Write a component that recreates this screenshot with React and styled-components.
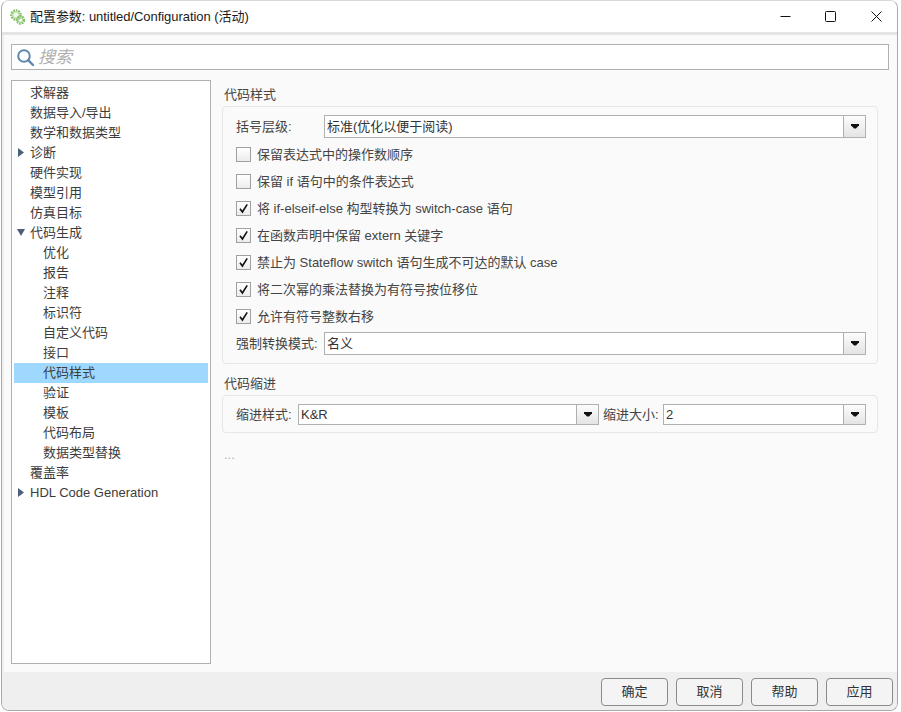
import React from 'react';
import styled, { createGlobalStyle } from 'styled-components';

const GlobalStyle = createGlobalStyle`
  html, body {
    margin: 0;
    padding: 0;
    background: #ffffff;
  }
  body {
    font-family: "Liberation Sans", "Noto Sans CJK SC", sans-serif;
    font-size: 13px;
    line-height: 14px;
    color: #333333;
  }
`;

const Window = styled.div`
  box-sizing: border-box;
  width: 897px;
  height: 711px;
  margin-left: 1px;
  border: 1px solid #a8a8a8;
  border-top-color: #d8d8d8;
  border-radius: 8px;
  overflow: hidden;
  display: flex;
  flex-direction: column;
  background: #fafafa;
`;

const TitleBar = styled.div`
  flex: none;
  height: 31px;
  display: flex;
  align-items: center;
  background: #ffffff;
  border-bottom: 3px solid #e4e4e4;
  padding-left: 8px;
`;

const TitleText = styled.div`
  flex: 1;
  margin-left: 5px;
  font-size: 13px;
  letter-spacing: -0.05px;
  color: #1a1a1a;
  white-space: nowrap;
`;

const WinButton = styled.div`
  box-sizing: border-box;
  width: 45px;
  height: 31px;
  padding-left: ${(p) => (p.$close ? 4 : 2)}px;
  display: flex;
  align-items: center;
  justify-content: center;
`;

const Body = styled.div`
  flex: 1;
  min-height: 0;
  display: flex;
  flex-direction: column;
  border-left: 2px solid #f0f0f0;
  padding: 9px 7px 8px 7px;
`;

const SearchBox = styled.div`
  box-sizing: border-box;
  flex: none;
  width: 878px;
  height: 26px;
  display: flex;
  align-items: center;
  gap: 3px;
  padding-left: 4px;
  background: #ffffff;
  border: 1px solid #b0b0b0;
`;

const SearchHint = styled.span`
  font-size: 17px;
  line-height: 20px;
  padding-top: 2px;
  font-style: italic;
  color: #b0b0b0;
`;

const Main = styled.div`
  flex: 1;
  min-height: 0;
  display: flex;
  gap: 11px;
  margin-top: 10px;
`;

const Tree = styled.div`
  box-sizing: border-box;
  flex: none;
  width: 200px;
  height: 584px;
  padding: 2px;
  background: #ffffff;
  border: 1px solid #b0b0b0;
`;

const TreeRow = styled.div`
  height: 20px;
  display: flex;
  align-items: center;
  padding-left: ${(p) => (p.$child ? 29 : 16)}px;
  background: ${(p) => (p.$selected ? '#9fd8ff' : 'transparent')};
  position: relative;
  white-space: nowrap;
  color: #3c3c3c;
`;

const Arrow = styled.svg`
  position: absolute;
  left: ${(p) => (p.$down ? 3 : 4)}px;
  top: ${(p) => (p.$down ? 6 : 5)}px;
  width: ${(p) => (p.$down ? 8 : 6)}px;
  height: ${(p) => (p.$down ? 7 : 9)}px;
`;

const Content = styled.div`
  flex: none;
  width: 656px;
  display: flex;
  flex-direction: column;
`;

const SectionTitle = styled.div`
  height: 16px;
  line-height: 16px;
  padding-left: 2px;
  color: #444444;
  margin-top: ${(p) => p.$top}px;
  margin-bottom: 3px;
`;

const Panel = styled.div`
  box-sizing: border-box;
  height: ${(p) => p.$height}px;
  border: 1px solid #e6e6e6;
  border-radius: 4px;
  padding: 8px 11px 0 13px;
  display: flex;
  flex-direction: column;
  background: #fafafa;
`;

const Line = styled.div`
  display: flex;
  align-items: center;
  height: ${(p) => p.$height || 23}px;
`;

const Label = styled.label`
  flex: none;
  width: ${(p) => (p.$width ? `${p.$width}px` : 'auto')};
  margin-left: ${(p) => p.$left || 0}px;
  color: #444444;
  white-space: nowrap;
`;

const Combo = styled.div`
  box-sizing: border-box;
  flex: ${(p) => (p.$width ? 'none' : 1)};
  width: ${(p) => (p.$width ? `${p.$width}px` : 'auto')};
  height: ${(p) => p.$height || 23}px;
  display: flex;
  align-items: stretch;
  background: #ffffff;
  border: 1px solid #b0b0b0;
`;

const ComboValue = styled.div`
  flex: 1;
  display: flex;
  align-items: center;
  padding-left: 2px;
  color: #333333;
`;

const ComboButton = styled.div`
  flex: none;
  width: 21px;
  display: flex;
  align-items: center;
  justify-content: center;
  border-left: 1px solid #b0b0b0;
  background: linear-gradient(#fcfcfc, #e4e4e4);
`;

const CheckRows = styled.div`
  display: flex;
  flex-direction: column;
  padding-top: 3px;
  margin-bottom: 2px;
`;

const CheckRow = styled.div`
  height: 27px;
  display: flex;
  align-items: center;
  gap: 6px;
  color: #444444;
  white-space: nowrap;
`;

const CheckBox = styled.div`
  box-sizing: border-box;
  width: 15px;
  height: 15px;
  display: flex;
  align-items: center;
  justify-content: center;
  border: 1px solid #a0a0a0;
  background: linear-gradient(#ffffff, #ececec);
`;

const Dots = styled.div`
  margin-top: 15px;
  padding-left: 2px;
  color: #b0b0b0;
  font-size: 13px;
  line-height: 14px;
`;

const Footer = styled.div`
  flex: none;
  height: 32px;
  display: flex;
  justify-content: flex-end;
  align-items: flex-start;
  gap: 8px;
  padding: 6px 4px 0 0;
  background: #efefef;
`;

const Button = styled.button`
  box-sizing: border-box;
  width: 67px;
  height: 28px;
  padding: 0;
  border: 1px solid #8a8a8a;
  border-radius: 4px;
  background: #f4f4f4;
  font: inherit;
  color: #333333;
`;

const treeItems = [
  { label: '求解器' },
  { label: '数据导入/导出' },
  { label: '数学和数据类型' },
  { label: '诊断', arrow: 'right' },
  { label: '硬件实现' },
  { label: '模型引用' },
  { label: '仿真目标' },
  { label: '代码生成', arrow: 'down' },
  { label: '优化', child: true },
  { label: '报告', child: true },
  { label: '注释', child: true },
  { label: '标识符', child: true },
  { label: '自定义代码', child: true },
  { label: '接口', child: true },
  { label: '代码样式', child: true, selected: true },
  { label: '验证', child: true },
  { label: '模板', child: true },
  { label: '代码布局', child: true },
  { label: '数据类型替换', child: true },
  { label: '覆盖率' },
  { label: 'HDL Code Generation', arrow: 'right' },
];

const checks = [
  { label: '保留表达式中的操作数顺序', checked: false },
  { label: '保留 if 语句中的条件表达式', checked: false },
  { label: '将 if-elseif-else 构型转换为 switch-case 语句', checked: true },
  { label: '在函数声明中保留 extern 关键字', checked: true },
  { label: '禁止为 Stateflow switch 语句生成不可达的默认 case', checked: true },
  { label: '将二次幂的乘法替换为有符号按位移位', checked: true },
  { label: '允许有符号整数右移', checked: true },
];

const Gear = ({ cx, cy, r }) => (
  <>
    <circle cx={cx} cy={cy} r={r} fill="none" stroke="#86c06c" strokeWidth="2.4" strokeDasharray="1.8 0.8" />
    <circle cx={cx} cy={cy} r={r - 1.4} fill="none" stroke="#a9d493" strokeWidth="1" />
    <circle cx={cx} cy={cy} r={r - 2.6} fill="#eef6e8" />
  </>
);

const AppIcon = () => (
  <svg width="15" height="16" viewBox="0 0 15 16">
    <Gear cx={6} cy={6} r={4.6} />
    <Gear cx={10.5} cy={11} r={3.6} />
  </svg>
);

const SearchIcon = () => (
  <svg width="19" height="19" viewBox="0 0 19 19">
    <circle cx="8" cy="8" r="5.8" fill="none" stroke="#5f88ad" strokeWidth="2" />
    <path d="M12.2 12.2 L17 17" stroke="#5f88ad" strokeWidth="2.4" strokeLinecap="round" />
  </svg>
);

const ComboArrow = () => (
  <svg width="8" height="5" viewBox="0 0 8 5">
    <path d="M0 0 H8 V1.2 L5 4.6 H3 L0 1.2 Z" fill="#111111" />
  </svg>
);

const CheckMark = () => (
  <svg width="11" height="11" viewBox="0 0 11 11">
    <path d="M2 5.8 L4.4 9 L9.2 1.4" fill="none" stroke="#111111" strokeWidth="1.6" />
  </svg>
);

const SelectBox = ({ value, width, height }) => (
  <Combo $width={width} $height={height}>
    <ComboValue>{value}</ComboValue>
    <ComboButton>
      <ComboArrow />
    </ComboButton>
  </Combo>
);

const App = () => (
  <>
    <GlobalStyle />
    <Window>
      <TitleBar>
        <AppIcon />
        <TitleText>配置参数: untitled/Configuration (活动)</TitleText>
        <WinButton>
          <svg width="11" height="11" viewBox="0 0 11 11">
            <path d="M0.5 5.5 H10.5" stroke="#111111" strokeWidth="1" />
          </svg>
        </WinButton>
        <WinButton>
          <svg width="11" height="11" viewBox="0 0 11 11">
            <rect x="0.5" y="0.5" width="10" height="10" rx="1" fill="none" stroke="#111111" />
          </svg>
        </WinButton>
        <WinButton $close>
          <svg width="11" height="11" viewBox="0 0 11 11">
            <path d="M0.5 0.5 L10.5 10.5 M10.5 0.5 L0.5 10.5" stroke="#111111" strokeWidth="1" />
          </svg>
        </WinButton>
      </TitleBar>
      <Body>
        <SearchBox>
          <SearchIcon />
          <SearchHint>搜索</SearchHint>
        </SearchBox>
        <Main>
          <Tree>
            {treeItems.map((item) => (
              <TreeRow key={item.label} $child={item.child} $selected={item.selected}>
                {item.arrow === 'right' && (
                  <Arrow viewBox="0 0 6 9">
                    <path d="M0 0 L6 4.5 L0 9 Z" fill="#4a6078" />
                  </Arrow>
                )}
                {item.arrow === 'down' && (
                  <Arrow $down viewBox="0 0 8 7">
                    <path d="M0 0 H8 L4 7 Z" fill="#4a6078" />
                  </Arrow>
                )}
                {item.label}
              </TreeRow>
            ))}
          </Tree>
          <Content>
            <SectionTitle $top={7}>代码样式</SectionTitle>
            <Panel $height={258}>
              <Line>
                <Label $width={88}>括号层级:</Label>
                <SelectBox value="标准(优化以便于阅读)" />
              </Line>
              <CheckRows>
                {checks.map((check) => (
                  <CheckRow key={check.label}>
                    <CheckBox>{check.checked && <CheckMark />}</CheckBox>
                    {check.label}
                  </CheckRow>
                ))}
              </CheckRows>
              <Line>
                <Label $width={88}>强制转换模式:</Label>
                <SelectBox value="名义" />
              </Line>
            </Panel>
            <SectionTitle $top={12}>代码缩进</SectionTitle>
            <Panel $height={38}>
              <Line $height={21}>
                <Label $width={62}>缩进样式:</Label>
                <SelectBox value="K&R" width={301} height={21} />
                <Label $width={60} $left={4}>缩进大小:</Label>
                <SelectBox value="2" height={21} />
              </Line>
            </Panel>
            <Dots>...</Dots>
          </Content>
        </Main>
      </Body>
      <Footer>
        <Button>确定</Button>
        <Button>取消</Button>
        <Button>帮助</Button>
        <Button>应用</Button>
      </Footer>
    </Window>
  </>
);

export default App;
